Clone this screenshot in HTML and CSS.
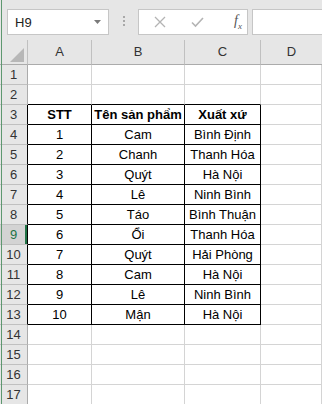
FILE: index.html
```html
<!DOCTYPE html>
<html lang="vi">
<head>
  <meta charset="UTF-8" />
  <title>Bảng sản phẩm</title>
  <link rel="stylesheet" href="styles.css">
</head>
<body>
  <div class="app">
    <div class="formula-bar">
      <div class="namebox">
        <span>H9</span>
        <svg class="caret" width="7" height="4" viewBox="0 0 7 4"><path d="M0 0h7L3.5 4z" fill="#7a7a7a"/></svg>
      </div>
      <div class="dots"><i></i><i></i><i></i></div>
      <div class="fx-box">
        <svg class="btn" width="12" height="12" viewBox="0 0 12 12"><path d="M1 1l10 10M11 1L1 11" stroke="#b4b4b4" stroke-width="1.3" fill="none"/></svg>
        <svg class="btn" width="13" height="12" viewBox="0 0 13 12"><path d="M1 6.5l3.5 3.5L12 2" stroke="#b4b4b4" stroke-width="1.6" fill="none"/></svg>
        <span class="fx">f<sub>x</sub></span>
      </div>
      <div class="formula-input"></div>
    </div>

    <div class="sheet">
      <div class="corner"><svg width="14" height="14" viewBox="0 0 14 14"><path d="M14 0v14H0z" fill="#b7b7b7"/></svg></div>
      <div class="colhead">A</div>
      <div class="colhead">B</div>
      <div class="colhead">C</div>
      <div class="colhead last">D</div>

      <div class="rowhead">1</div><div class="cell"></div><div class="cell"></div><div class="cell"></div><div class="cell"></div>
      <div class="rowhead">2</div><div class="cell top"></div><div class="cell top"></div><div class="cell top"></div><div class="cell"></div>

      <div class="rowhead edge">3</div><div class="cell t bold">STT</div><div class="cell t bold">Tên sản phẩm</div><div class="cell t bold">Xuất xứ</div><div class="cell"></div>
      <div class="rowhead edge">4</div><div class="cell t">1</div><div class="cell t">Cam</div><div class="cell t">Bình Định</div><div class="cell"></div>
      <div class="rowhead edge">5</div><div class="cell t">2</div><div class="cell t">Chanh</div><div class="cell t">Thanh Hóa</div><div class="cell"></div>
      <div class="rowhead edge">6</div><div class="cell t">3</div><div class="cell t">Quýt</div><div class="cell t">Hà Nội</div><div class="cell"></div>
      <div class="rowhead edge">7</div><div class="cell t">4</div><div class="cell t">Lê</div><div class="cell t">Ninh Bình</div><div class="cell"></div>
      <div class="rowhead edge">8</div><div class="cell t">5</div><div class="cell t">Táo</div><div class="cell t">Bình Thuận</div><div class="cell"></div>
      <div class="rowhead edge active">9</div><div class="cell t">6</div><div class="cell t">Ổi</div><div class="cell t">Thanh Hóa</div><div class="cell"></div>
      <div class="rowhead edge">10</div><div class="cell t">7</div><div class="cell t">Quýt</div><div class="cell t">Hải Phòng</div><div class="cell"></div>
      <div class="rowhead edge">11</div><div class="cell t">8</div><div class="cell t">Cam</div><div class="cell t">Hà Nội</div><div class="cell"></div>
      <div class="rowhead edge">12</div><div class="cell t">9</div><div class="cell t">Lê</div><div class="cell t">Ninh Bình</div><div class="cell"></div>
      <div class="rowhead edge">13</div><div class="cell t">10</div><div class="cell t">Mận</div><div class="cell t">Hà Nội</div><div class="cell"></div>

      <div class="rowhead">14</div><div class="cell"></div><div class="cell"></div><div class="cell"></div><div class="cell"></div>
      <div class="rowhead">15</div><div class="cell"></div><div class="cell"></div><div class="cell"></div><div class="cell"></div>
      <div class="rowhead">16</div><div class="cell"></div><div class="cell"></div><div class="cell"></div><div class="cell"></div>
      <div class="rowhead">17</div><div class="cell"></div><div class="cell"></div><div class="cell"></div><div class="cell"></div>
    </div>
  </div>
</body>
</html>
```

FILE: styles.css
```css
* {
  box-sizing: border-box;
}
body {
  margin: 0;
  width: 322px;
  height: 404px;
  overflow: hidden;
  font-family: "Liberation Sans", Arial, sans-serif;
  font-size: 13px;
  color: #000;
  background: #fff;
}
.app {
  position: relative;
  height: 404px;
}
.app::before {
  content: "";
  position: absolute;
  left: 1px;
  top: 0;
  bottom: 0;
  width: 1px;
  background: #5e9870;
  z-index: 2;
}

/* thanh công thức */
.formula-bar {
  height: 40px;
  background: #e6e6e6;
  display: flex;
  align-items: flex-start;
  padding-top: 9px;
  padding-left: 7px;
}
.namebox {
  width: 102px;
  height: 26px;
  background: #fff;
  border: 1px solid #c6c6c6;
  display: flex;
  align-items: center;
  justify-content: space-between;
  padding: 0 7px 0 7px;
}
.namebox span {
  font-size: 13px;
  color: #222;
}
.dots {
  width: 29px;
  display: flex;
  flex-direction: column;
  align-items: center;
  gap: 2px;
  padding-top: 7px;
}
.dots i {
  width: 2px;
  height: 2px;
  background: #a8a8a8;
}
.fx-box {
  width: 110px;
  height: 26px;
  background: #fff;
  border: 1px solid #c6c6c6;
  display: flex;
  align-items: center;
  padding-left: 15px;
}
.fx-box .btn {
  margin-right: 25px;
}
.fx {
  font-family: "Liberation Serif", serif;
  font-style: italic;
  font-size: 14px;
  color: #555;
  margin-left: 5px;
}
.fx sub {
  font-size: 9px;
}
.formula-input {
  flex: 1;
  min-width: 0;
  height: 26px;
  margin-left: 4px;
  background: #fff;
  border: 1px solid #c6c6c6;
  border-right: none;
}

/* bảng tính */
.sheet {
  display: grid;
  grid-template-columns: 28px 64px 93px 76px 1fr;
  grid-template-rows: 25px repeat(17, 20px);
}
.corner {
  background: #e6e6e6;
  border-right: 1px solid #c0c0c0;
  border-bottom: 1px solid #ababab;
  display: flex;
  align-items: flex-end;
  justify-content: flex-end;
  padding: 0 3px 2px 0;
}
.colhead {
  background: #e6e6e6;
  border-right: 1px solid #c0c0c0;
  border-bottom: 1px solid #ababab;
  color: #333;
  text-align: center;
  line-height: 24px;
}
.colhead.last {
  border-right: none;
}
.rowhead {
  background: #e6e6e6;
  border-right: 1px solid #ababab;
  border-bottom: 1px solid #c0c0c0;
  color: #333;
  text-align: center;
  line-height: 19px;
}
.rowhead.edge {
  border-right-color: #000;
}
.rowhead.active {
  background: #d3d3d3;
  color: #217346;
  box-shadow: inset -2px 0 0 #217346;
}
.cell {
  border-right: 1px solid #d4d4d4;
  border-bottom: 1px solid #d4d4d4;
  text-align: center;
  line-height: 19px;
  white-space: nowrap;
}
.cell.top {
  border-bottom-color: #000;
}
.cell.t {
  border-right-color: #000;
  border-bottom-color: #000;
}
.bold {
  font-weight: bold;
}
```
